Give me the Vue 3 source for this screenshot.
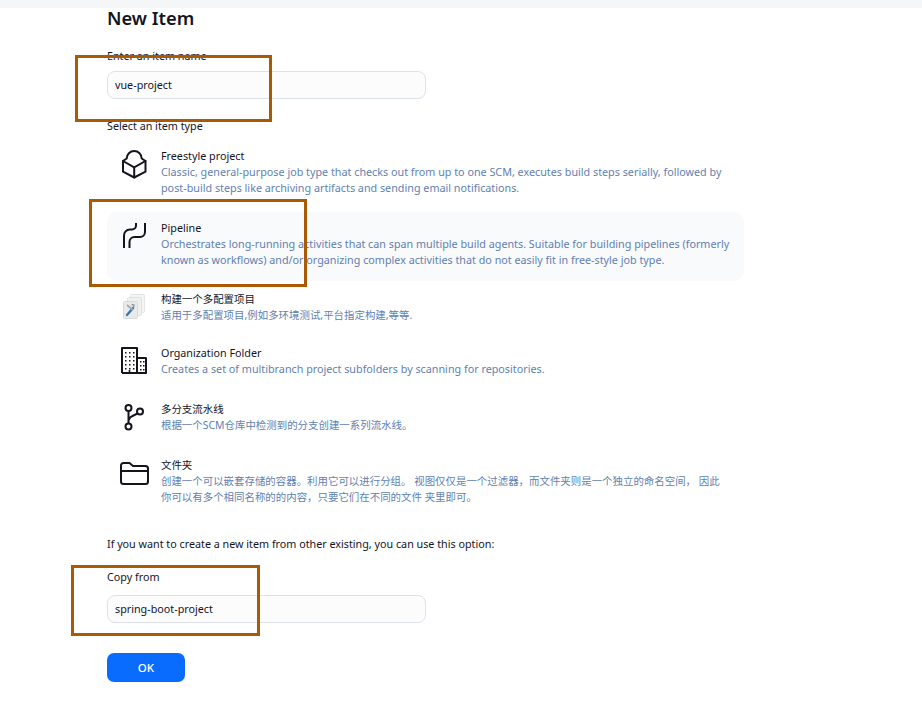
<script setup>
const items = [
  { key: 'free', title: 'Freestyle project', lines: ['Classic, general-purpose job type that checks out from up to one SCM, executes build steps serially, followed by', 'post-build steps like archiving artifacts and sending email notifications.'] },
  { key: 'pipe', title: 'Pipeline', active: true, lines: ['Orchestrates long-running activities that can span multiple build agents. Suitable for building pipelines (formerly', 'known as workflows) and/or organizing complex activities that do not easily fit in free-style job type.'] },
  { key: 'multi', cjk: true, title: '构建一个多配置项目', lines: ['适用于多配置项目,例如多环境测试,平台指定构建,等等.'] },
  { key: 'org', title: 'Organization Folder', lines: ['Creates a set of multibranch project subfolders by scanning for repositories.'] },
  { key: 'branch', cjk: true, title: '多分支流水线', lines: ['根据一个SCM仓库中检测到的分支创建一系列流水线。'] },
  { key: 'folder', cjk: true, title: '文件夹', lines: ['创建一个可以嵌套存储的容器。利用它可以进行分组。 视图仅仅是一个过滤器，而文件夹则是一个独立的命名空间， 因此', '你可以有多个相同名称的的内容，只要它们在不同的文件 夹里即可。'] },
]
const orgMain = []
for (const y of [5, 9, 13, 17, 21]) for (const x of [4, 8, 12]) orgMain.push({ x, y })
const orgWing = []
for (const y of [14, 18, 22]) for (const x of [19, 22]) orgWing.push({ x, y })
</script>

<template>
  <div class="page">
    <div class="topbar"></div>
    <main class="content">
      <h1 class="heading">New Item</h1>
      <label class="label name-label">Enter an item name</label>
      <input class="field" value="vue-project" />
      <div class="label type-label">Select an item type</div>
      <ul class="types">
        <li v-for="it in items" :key="it.key" class="type" :class="[it.key, { active: it.active, cjk: it.cjk }]">
          <div class="icon">
            <svg v-if="it.key === 'free'" width="25" height="30" viewBox="0 0 25 30" fill="none" stroke="#14141f" stroke-width="2" stroke-linejoin="round" stroke-linecap="round">
              <path d="M1 12L4.700 9.500A7.500 7.500 0 0 1 19.700 9.500L23.500 12V22.700L12.200 28.500L1 22.700Z" />
              <path d="M1 12L12.200 18.300L23.500 12M12.200 18.300V28.500" />
            </svg>
            <svg v-else-if="it.key === 'pipe'" width="24" height="27" viewBox="0 0 24 27" fill="none" stroke="#14141f" stroke-width="2">
              <path d="M2 26V14a6 6 0 0 1 6-6.500h2a4 4 0 0 0 4-4V1" />
              <path d="M7.500 26V20a5 5 0 0 1 5-5h5.500a5 5 0 0 0 5-5V1" />
            </svg>
            <svg v-else-if="it.key === 'multi'" width="22" height="25" viewBox="0 0 22 25">
              <rect x="7.500" y="0.500" width="14" height="18" rx="1" fill="#f3f4f4" stroke="#e4e5e5" />
              <rect x="4.500" y="3.500" width="14" height="18" rx="1" fill="#eff0f0" stroke="#e0e1e1" />
              <rect x="0.500" y="7.500" width="14" height="17" rx="1" fill="#e9ebeb" stroke="#d9dbdb" />
              <path d="M4 21l6-7" stroke="#3c76b4" stroke-width="2.400" stroke-linecap="round" />
              <path d="M4 11l6 5" stroke="#a3a9ad" stroke-width="1.800" />
              <path d="M8.500 10.500l2.500.500-.500 2.500" fill="none" stroke="#8f979c" stroke-width="1.300" />
            </svg>
            <svg v-else-if="it.key === 'org'" width="26" height="27" viewBox="0 0 26 27" fill="none" stroke="#14141f" stroke-width="2">
              <path d="M1 26V1H16V26M16 11H25V26H1" stroke-linejoin="round" />
              <path d="M8.500 26v-3" stroke-width="1.600" />
              <rect v-for="(d, i) in orgMain" :key="'m' + i" :x="d.x" :y="d.y" width="1.500" height="1.500" fill="#14141f" stroke="none" />
              <rect v-for="(d, i) in orgWing" :key="'w' + i" :x="d.x" :y="d.y" width="1.500" height="1.500" fill="#14141f" stroke="none" />
            </svg>
            <svg v-else-if="it.key === 'branch'" width="20" height="27" viewBox="0 0 20 27" fill="none" stroke="#14141f" stroke-width="2">
              <circle cx="4.500" cy="4" r="3" />
              <circle cx="16" cy="7.500" r="3" />
              <circle cx="4.500" cy="22.500" r="3" />
              <path d="M4.500 7V19.500M4.500 18c0-4 1.500-5 4-6l5-2.500" />
            </svg>
            <svg v-else width="29" height="23" viewBox="0 0 29 23" fill="none" stroke="#14141f" stroke-width="2" stroke-linejoin="round">
              <path d="M1 5.500V3.500a2.500 2.500 0 0 1 2.500-2.500h6l3.500 3h12.500a2.500 2.500 0 0 1 2.500 2.500V19.500a2.500 2.500 0 0 1-2.500 2.500h-22a2.500 2.500 0 0 1-2.500-2.500z" />
              <path d="M1 9h27" />
            </svg>
          </div>
          <div class="text">
            <div class="title">{{ it.title }}</div>
            <div v-for="line in it.lines" :key="line" class="desc">{{ line }}</div>
          </div>
        </li>
      </ul>
      <p class="label hint">If you want to create a new item from other existing, you can use this option:</p>
      <label class="label copy-label">Copy from</label>
      <input class="field copy-field" value="spring-boot-project" />
      <button class="ok">OK</button>
    </main>
    <div class="mark mark-name"></div>
    <div class="mark mark-pipe"></div>
    <div class="mark mark-copy"></div>
  </div>
</template>

<style>
html, body { margin: 0; background: #fff; }
</style>

<style scoped>
.page {
  position: relative;
  width: 922px;
  height: 701px;
  overflow: hidden;
  background: #fff;
  font-family: "Noto Sans", "Noto Sans CJK SC", sans-serif;
  font-size: 10.750px;
  line-height: 16px;
  color: #14141f;
}
.topbar { height: 8px; background: #f5f6f8; }
.content { width: 637px; margin-left: 107px; display: flex; flex-direction: column; align-items: flex-start; }
.heading { margin: -2px 0 0; height: 25px; font-size: 18.300px; line-height: 23px; font-weight: 600; color: #14141f; }
.label { display: block; margin: 0; }
.name-label { margin-top: 17px; height: 16px; }
.field {
  box-sizing: border-box;
  width: 319px;
  height: 28px;
  margin: 7px 0 0;
  padding: 0 7px 1px;
  border: 1px solid #dde1ee;
  border-radius: 8px;
  background: #fcfcfd;
  font: inherit;
  color: #14141f;
  outline: none;
}
.type-label { margin-top: 19px; }
.types { list-style: none; margin: 6px 0 0; padding: 0; width: 637px; display: flex; flex-direction: column; gap: 3px; }
.type { box-sizing: border-box; display: flex; padding: 8px 0 0 0; border-radius: 10px; }
.type.cjk { font-size: 10.450px; }
.type.free, .type.pipe { height: 69px; }
.type.free .desc, .type.pipe .desc, .type.org .desc { font-size: 10.780px; }
.type.active { background: #f9fafc; }
.type.multi { height: 51px; padding-top: 7px; }
.type.org { height: 54px; padding-top: 7px; }
.type.branch { height: 53px; padding-top: 6px; }
.type.folder { height: 69px; padding-top: 6px; }
.icon { width: 54px; display: flex; justify-content: center; align-items: flex-start; flex: none; }
.free .icon { margin-top: 1px; }
.pipe .icon { margin-top: 2px; }
.multi .icon { margin-top: 3px; }
.org .icon { margin-top: 2px; }
.branch .icon { margin-top: 3px; }
.folder .icon { margin-top: 5px; }
.text { min-width: 0; white-space: nowrap; }
.title { color: #14141f; }
.desc { color: #627fb0; }
.hint { margin-top: 16px; }
.copy-label { margin-top: 17px; }
.copy-field { margin-top: 10px; }
.ok {
  width: 78px;
  height: 29px;
  margin-top: 30px;
  border: 0;
  border-radius: 7px;
  background: #0a6cff;
  color: #fff;
  font: inherit;
  font-size: 11.500px;
  font-weight: 500;
}
.mark { position: absolute; box-sizing: border-box; border: 3px solid #aa5a05; pointer-events: none; }
.mark-name { left: 75px; top: 55px; width: 197px; height: 67px; }
.mark-pipe { left: 89px; top: 199px; width: 218px; height: 88px; }
.mark-copy { left: 71px; top: 565px; width: 189px; height: 71px; }
</style>
